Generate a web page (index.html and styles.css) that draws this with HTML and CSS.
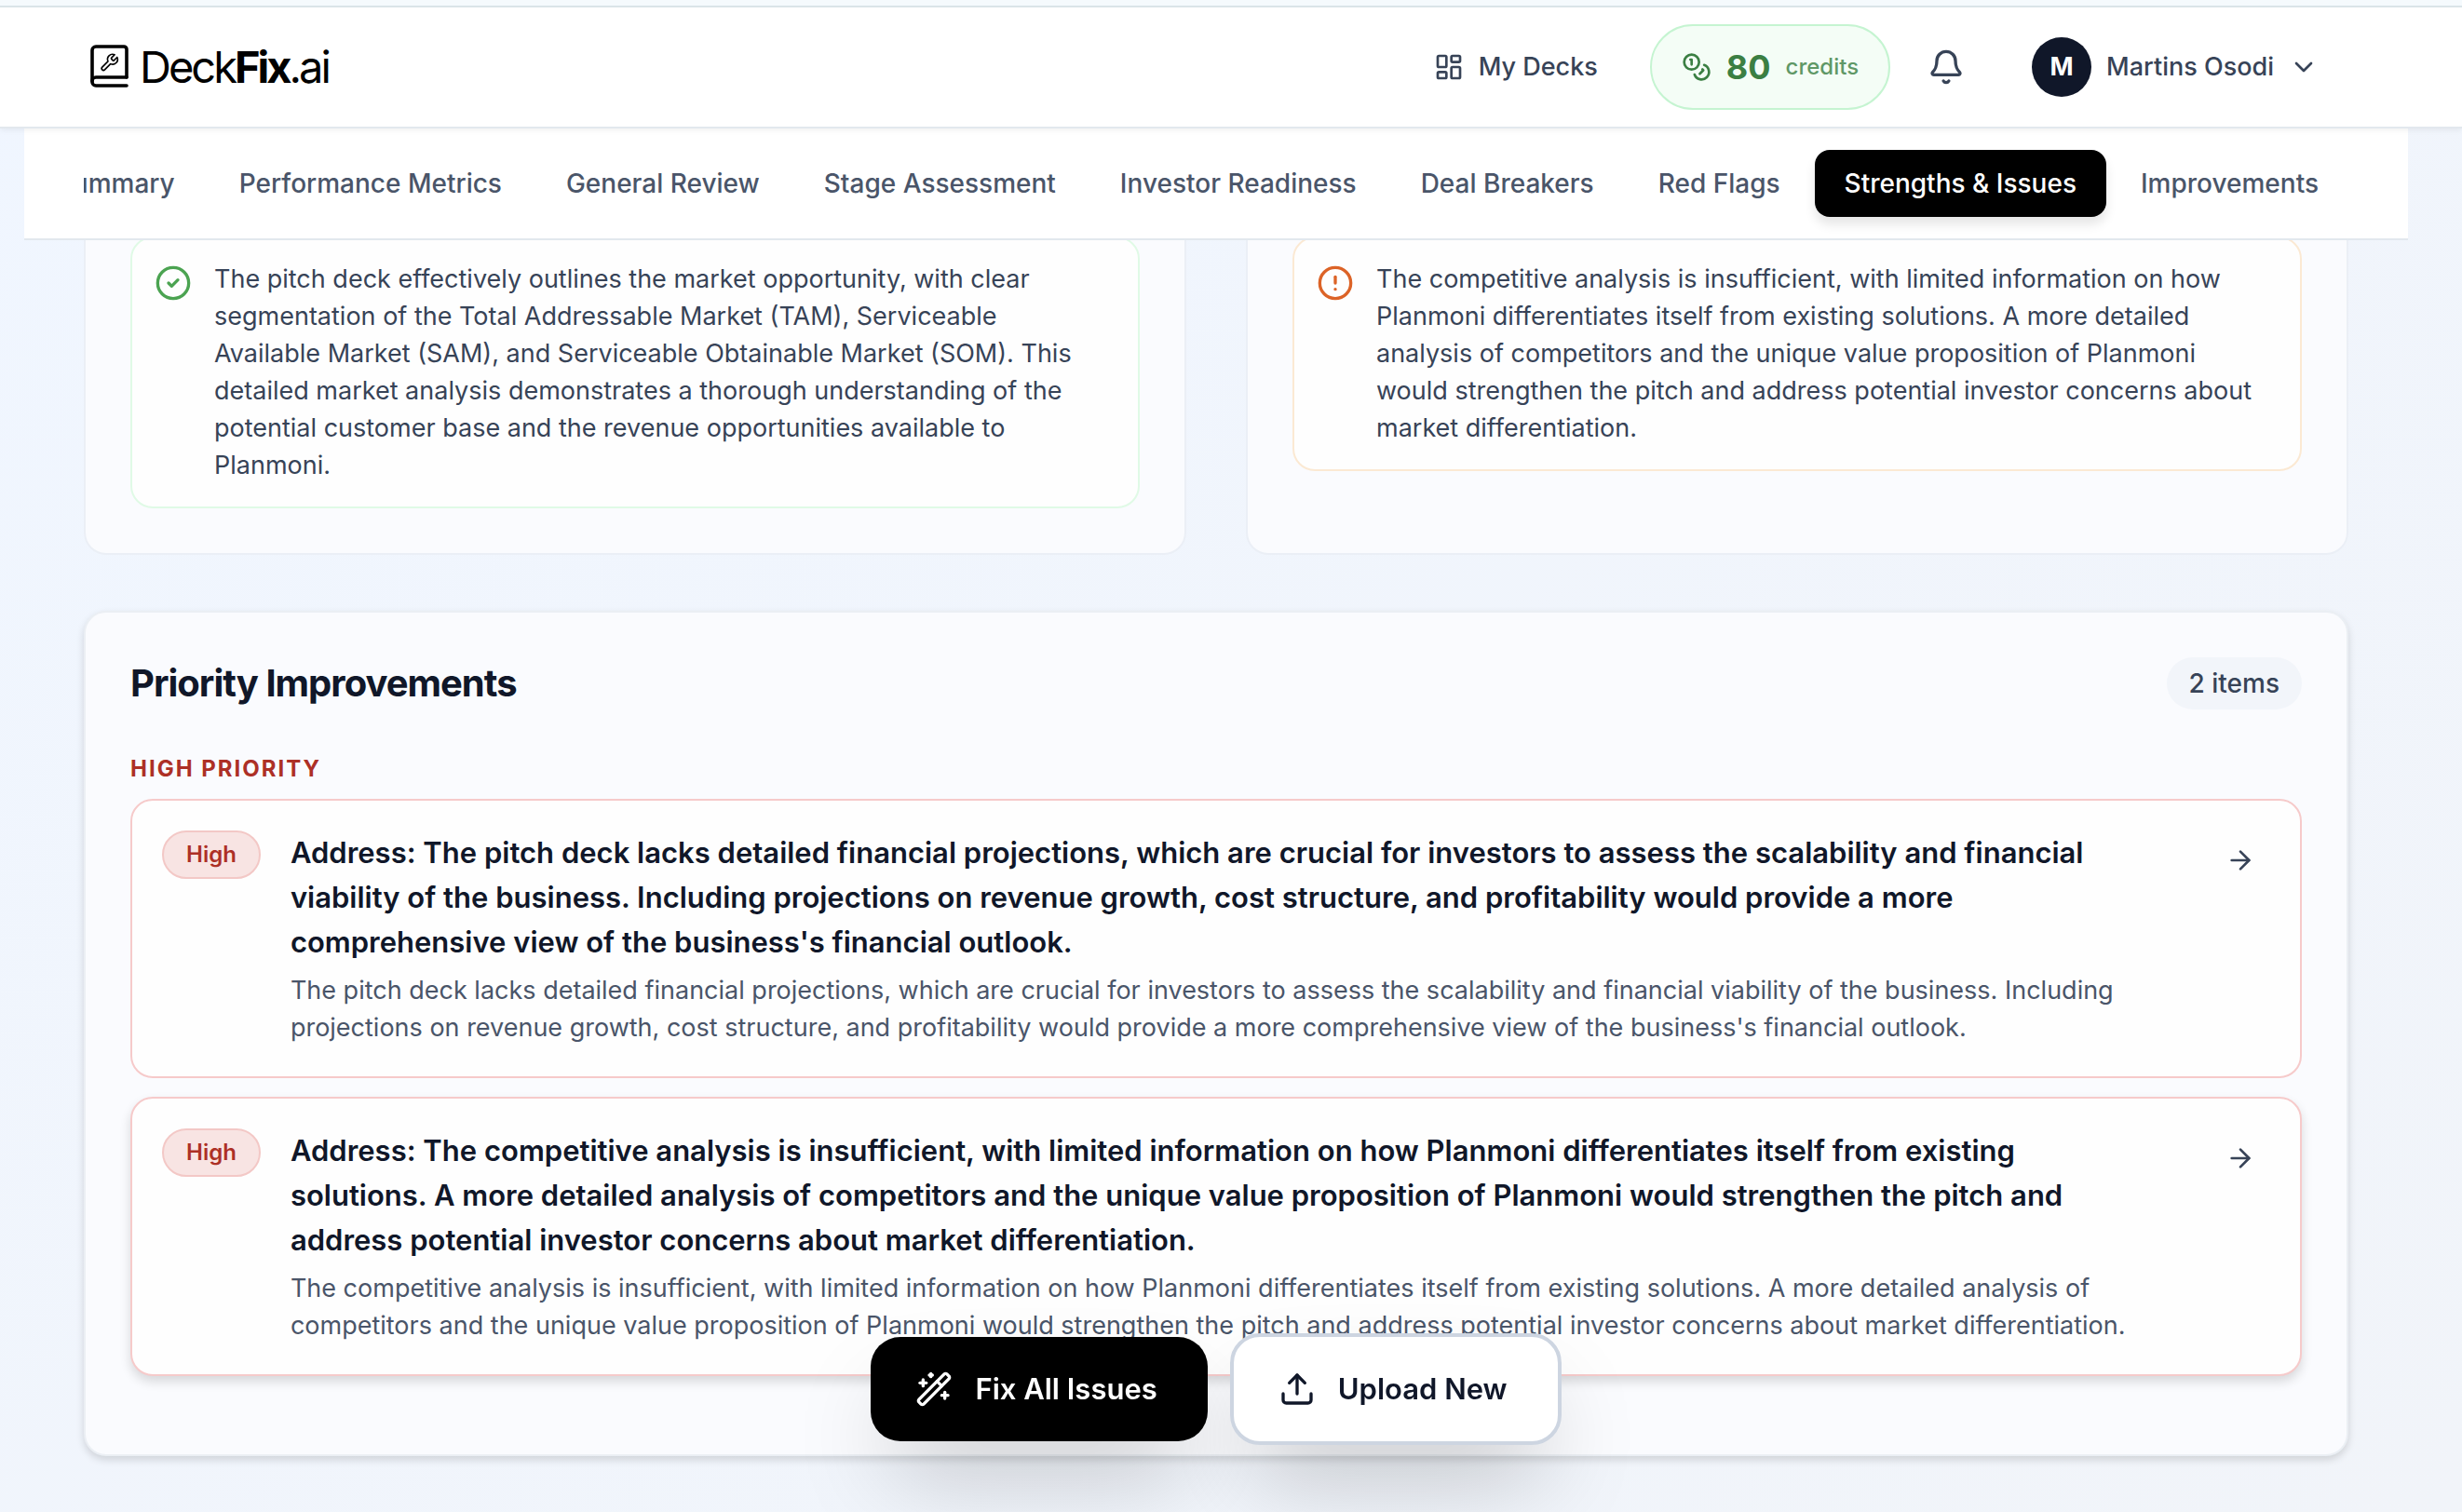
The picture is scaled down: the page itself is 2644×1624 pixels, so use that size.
FILE: index.html
```html
<!DOCTYPE html>
<html lang="en">
<head>
    <meta charset="UTF-8">
    <meta name="viewport" content="width=device-width, initial-scale=1.0">
    <title>DeckFix.ai</title>
    <link rel="stylesheet" href="styles.css">
</head>
<body>
    <header class="header">
        <a href="#" class="logo">
            <svg class="logo-icon" viewBox="0 0 44 48" fill="none" stroke="#000" stroke-width="3.6" stroke-linecap="round" stroke-linejoin="round">
                <path d="M40 35V5a3 3 0 0 0-3-3H7a4 4 0 0 0-4 4v34a4 4 0 0 0 4 4h33"/>
                <path d="M3 39a4 4 0 0 1 4-4h33"/>
                <path stroke-width="1.800" transform="translate(10.500 8.500) scale(0.900)" d="M14.700 6.300a1 1 0 0 0 0 1.400l1.600 1.600a1 1 0 0 0 1.400 0l3.770-3.770a6 6 0 0 1-7.940 7.940l-6.910 6.910a2.120 2.120 0 0 1-3-3l6.910-6.910a6 6 0 0 1 7.940-7.940l-3.760 3.760z"/>
            </svg>
            <span>Deck<b>Fix</b>.ai</span>
        </a>
        <nav class="header-nav">
            <a href="#" class="decks-link">
                <svg class="icon" viewBox="0 0 24 24"><rect x="3" y="3" width="7" height="9" rx="1"/><rect x="14" y="3" width="7" height="5" rx="1"/><rect x="14" y="12" width="7" height="9" rx="1"/><rect x="3" y="16" width="7" height="5" rx="1"/></svg>
                My Decks
            </a>
            <a href="#" class="credits">
                <svg class="icon" viewBox="0 0 24 24"><circle cx="8" cy="8" r="6"/><path d="M18.090 10.370A6 6 0 1 1 10.340 18"/><path d="M7 6h1v4"/><path d="m16.710 13.880.7.710-2.820 2.820"/></svg>
                <strong>80</strong>
                <span>credits</span>
            </a>
            <button class="bell" aria-label="Notifications">
                <svg class="icon icon-lg" viewBox="0 0 24 24"><path d="M10.268 21a2 2 0 0 0 3.464 0"/><path d="M3.262 15.326A1 1 0 0 0 4 17h16a1 1 0 0 0 .740-1.673C19.410 13.956 18 12.499 18 8A6 6 0 0 0 6 8c0 4.499-1.411 5.956-2.738 7.326"/></svg>
            </button>
            <button class="user">
                <span class="avatar">M</span>
                Martins Osodi
                <svg class="icon" viewBox="0 0 24 24"><path d="m6 9 6 6 6-6"/></svg>
            </button>
        </nav>
    </header>

    <main class="page">
        <nav class="tabs">
            <div class="tabs-list">
                <a href="#" class="tab">Summary</a>
                <a href="#" class="tab">Performance Metrics</a>
                <a href="#" class="tab">General Review</a>
                <a href="#" class="tab">Stage Assessment</a>
                <a href="#" class="tab">Investor Readiness</a>
                <a href="#" class="tab">Deal Breakers</a>
                <a href="#" class="tab">Red Flags</a>
                <a href="#" class="tab active">Strengths &amp; Issues</a>
                <a href="#" class="tab">Improvements</a>
            </div>
        </nav>

        <div class="content">
            <div class="columns">
                <section class="panel">
                    <div class="note note-green">
                        <svg class="icon" viewBox="0 0 24 24"><circle cx="12" cy="12" r="10"/><path d="m9 12 2 2 4-4"/></svg>
                        <p>The pitch deck effectively outlines the market opportunity, with clear segmentation of the Total Addressable Market (TAM), Serviceable Available Market (SAM), and Serviceable Obtainable Market (SOM). This detailed market analysis demonstrates a thorough understanding of the potential customer base and the revenue opportunities available to Planmoni.</p>
                    </div>
                </section>
                <section class="panel">
                    <div class="note note-orange">
                        <svg class="icon" viewBox="0 0 24 24"><circle cx="12" cy="12" r="10"/><path d="M12 8v4"/><path d="M12 16h.01"/></svg>
                        <p>The competitive analysis is insufficient, with limited information on how Planmoni differentiates itself from existing solutions. A more detailed analysis of competitors and the unique value proposition of Planmoni would strengthen the pitch and address potential investor concerns about market differentiation.</p>
                    </div>
                </section>
            </div>

            <section class="priority">
                <div class="priority-head">
                    <h2>Priority Improvements</h2>
                    <span class="count">2 items</span>
                </div>
                <h3>High Priority</h3>
                <article class="issue">
                    <span class="badge">High</span>
                    <div class="issue-text">
                        <h4>Address: The pitch deck lacks detailed financial projections, which are crucial for investors to assess the scalability and financial viability of the business. Including projections on revenue growth, cost structure, and profitability would provide a more comprehensive view of the business's financial outlook.</h4>
                        <p>The pitch deck lacks detailed financial projections, which are crucial for investors to assess the scalability and financial viability of the business. Including projections on revenue growth, cost structure, and profitability would provide a more comprehensive view of the business's financial outlook.</p>
                    </div>
                    <button class="go" aria-label="Open">
                        <svg class="icon" viewBox="0 0 24 24"><path d="M5 12h14"/><path d="m12 5 7 7-7 7"/></svg>
                    </button>
                </article>
                <article class="issue raised">
                    <span class="badge">High</span>
                    <div class="issue-text">
                        <h4>Address: The competitive analysis is insufficient, with limited information on how Planmoni differentiates itself from existing solutions. A more detailed analysis of competitors and the unique value proposition of Planmoni would strengthen the pitch and address potential investor concerns about market differentiation.</h4>
                        <p>The competitive analysis is insufficient, with limited information on how Planmoni differentiates itself from existing solutions. A more detailed analysis of competitors and the unique value proposition of Planmoni would strengthen the pitch and address potential investor concerns about market differentiation.</p>
                    </div>
                    <button class="go" aria-label="Open">
                        <svg class="icon" viewBox="0 0 24 24"><path d="M5 12h14"/><path d="m12 5 7 7-7 7"/></svg>
                    </button>
                </article>
            </section>
        </div>
    </main>

    <div class="actions">
        <button class="action action-dark">
            <svg class="icon icon-lg" viewBox="0 0 24 24"><path d="m21.640 3.640-1.280-1.280a1.210 1.210 0 0 0-1.720 0L2.360 18.640a1.210 1.210 0 0 0 0 1.720l1.280 1.280a1.200 1.200 0 0 0 1.720 0L21.640 5.360a1.200 1.200 0 0 0 0-1.720"/><path d="m14 7 3 3"/><path d="M5 6v4"/><path d="M19 14v4"/><path d="M10 2v2"/><path d="M7 8H3"/><path d="M21 16h-4"/><path d="M11 3H9"/></svg>
            Fix All Issues
        </button>
        <button class="action action-light">
            <svg class="icon icon-lg" viewBox="0 0 24 24"><path d="M12 3v12"/><path d="m17 8-5-5-5 5"/><path d="M21 15v4a2 2 0 0 1-2 2H5a2 2 0 0 1-2-2v-4"/></svg>
            Upload New
        </button>
    </div>
</body>
</html>
```

FILE: styles.css
```css
* {
    box-sizing: border-box;
}

body {
    margin: 0;
    min-height: 100vh;
    font-family: Inter, "Liberation Sans", sans-serif;
    font-size: 27px;
    line-height: 40px;
    color: #374357;
    background: linear-gradient(to bottom right, #f0f6ff, #f1f4f9);
    overflow: hidden;
}

h2, h3, h4, p {
    margin: 0;
}

a {
    color: inherit;
    text-decoration: none;
}

button {
    font: inherit;
    color: inherit;
    border: none;
    background: none;
    padding: 0;
    cursor: pointer;
}

.icon {
    width: 32px;
    height: 32px;
    fill: none;
    stroke: currentColor;
    stroke-width: 2;
    stroke-linecap: round;
    stroke-linejoin: round;
    flex-shrink: 0;
}

.icon-lg {
    width: 40px;
    height: 40px;
}

/* Header */
.header {
    display: flex;
    align-items: center;
    justify-content: space-between;
    height: 138px;
    padding: 8px 154px 0 96px;
    background: linear-gradient(#f5fafd 6px, #dae4e8 6px, #dae4e8 8px, #fff 8px);
    border-bottom: 2px solid #e2e8ee;
    box-shadow: 0 2px 6px rgba(0, 0, 0, 0.06);
    position: relative;
    z-index: 3;
}

.logo {
    display: flex;
    align-items: center;
    gap: 10px;
    font-size: 47px;
    font-weight: 400;
    color: #000;
    letter-spacing: -3px;
}

.logo b {
    font-weight: 700;
}

.logo-icon {
    width: 44px;
    height: 48px;
}

.header-nav,
.decks-link,
.credits,
.user {
    display: flex;
    align-items: center;
    font-weight: 500;
}

.decks-link {
    gap: 16px;
    margin-right: 56px;
}

.credits {
    gap: 16px;
    height: 92px;
    padding: 0 32px;
    border: 2px solid #c5f4d1;
    border-radius: 46px;
    background: #f4fdf6;
    color: #3b7f43;
}

.credits strong {
    font-size: 36px;
    font-weight: 700;
}

.credits span {
    font-size: 24px;
    opacity: 0.8;
}

.bell {
    display: flex;
    margin: 0 72px 0 40px;
}

.user {
    gap: 16px;
}

.avatar {
    width: 64px;
    height: 64px;
    border-radius: 50%;
    background: #101729;
    color: #fff;
    font-weight: 700;
    line-height: 64px;
}

/* Tabs */
.page {
    padding: 0 58px 0 26px;
}

.tabs {
    height: 120px;
    padding: 0 64px;
    background: #fff;
    border-bottom: 2px solid #e2e8ee;
    position: relative;
    z-index: 2;
}

.tabs-list {
    display: flex;
    align-items: center;
    justify-content: flex-end;
    gap: 5px;
    height: 118px;
    overflow: hidden;
}

.tab {
    padding: 16px 32px;
    border-radius: 16px;
    font-size: 28px;
    font-weight: 500;
    color: #4a5569;
    white-space: nowrap;
}

.tab.active {
    background: #000;
    color: #fff;
    box-shadow: 0 8px 12px rgba(0, 0, 0, 0.1);
}

/* Content */
.content {
    padding: 0 64px;
}

.columns {
    display: grid;
    grid-template-columns: 1fr 1fr;
    gap: 64px;
}

.panel {
    padding: 0 48px 48px;
    border: 2px solid #ebeff6;
    border-top: none;
    border-radius: 0 0 24px 24px;
    background: #fafbfe;
}

.note {
    display: flex;
    align-items: flex-start;
    gap: 24px;
    margin-top: -4px;
    padding: 24px 32px 24px 24px;
    border: 2px solid;
    border-radius: 24px;
    background: #fefefe;
}

.note .icon {
    width: 40px;
    height: 40px;
    margin-top: 4px;
}

.note-green {
    border-color: #e0fae6;
}

.note-green .icon {
    color: #4ba351;
}

.note-orange {
    border-color: #fbe9d3;
}

.note-orange .icon {
    color: #dc6327;
}

.priority {
    margin-top: 60px;
    padding: 48px 48px 84px;
    border: 2px solid #ebeff4;
    border-radius: 24px;
    background: #fafbfe;
    box-shadow: 0 4px 8px rgba(0, 0, 0, 0.14);
}

.priority-head {
    display: flex;
    align-items: center;
    justify-content: space-between;
    height: 56px;
}

.priority h2 {
    font-size: 40px;
    font-weight: 700;
    letter-spacing: -1px;
    color: #101729;
}

.count {
    padding: 8px 24px;
    border-radius: 28px;
    background: #f2f5fa;
    font-size: 28px;
    font-weight: 500;
}

.priority h3 {
    margin: 44px 0 12px;
    font-size: 24px;
    font-weight: 700;
    letter-spacing: 2px;
    text-transform: uppercase;
    color: #ad3026;
}

.issue {
    display: flex;
    align-items: flex-start;
    gap: 32px;
    padding: 32px;
    border: 2px solid #f6caca;
    border-radius: 24px;
    background: #fefefe;
}

.issue + .issue {
    margin-top: 20px;
}

.issue.raised {
    box-shadow: 0 6px 12px rgba(0, 0, 0, 0.14);
}

.badge {
    padding: 4px 24px;
    border: 2px solid #f3c8c6;
    border-radius: 26px;
    background: #f8e4e3;
    color: #ad3026;
    font-size: 24px;
    font-weight: 600;
}

.issue-text {
    flex: 1;
    padding-right: 32px;
}

.issue h4 {
    font-size: 31px;
    font-weight: 600;
    line-height: 48px;
    color: #101729;
}

.issue p {
    margin-top: 8px;
    color: #4a5569;
}

.go {
    display: flex;
    padding: 16px;
}

/* Floating buttons */
.actions {
    position: fixed;
    bottom: 72px;
    left: 0;
    right: 32px;
    display: flex;
    align-items: center;
    justify-content: center;
    gap: 24px;
    z-index: 4;
}

.action {
    display: flex;
    align-items: center;
    gap: 24px;
    height: 112px;
    padding: 0 54px 0 48px;
    border-radius: 32px;
    font-size: 31px;
    font-weight: 600;
    box-shadow: 0 50px 100px -24px rgba(0, 0, 0, 0.25);
}

.action-dark {
    background: #000;
    color: #fff;
}

.action-light {
    height: 120px;
    background: #fff;
    color: #101729;
    border: 4px solid #cdd5e1;
}
```
